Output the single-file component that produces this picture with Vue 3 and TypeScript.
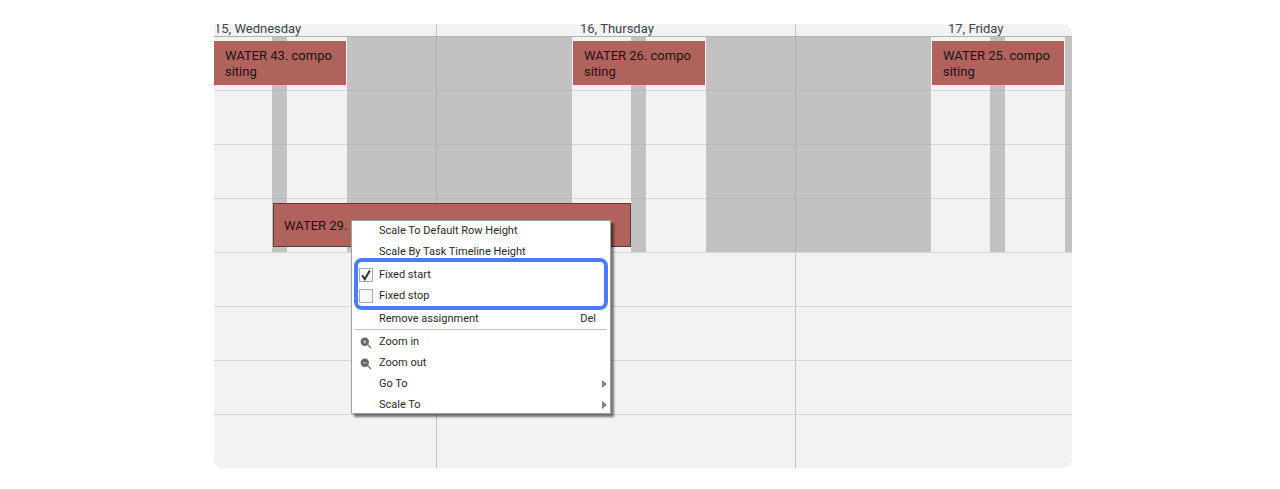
<script setup lang="ts">
interface Bar { id: number; left: number; width: number; label: string }
const dayLabels = [
  { text: '15, Wednesday', left: 0 },
  { text: '16, Thursday', left: 366 },
  { text: '17, Friday', left: 734 },
]
const bands = [
  { left: 58, width: 15 },
  { left: 133, width: 225 },
  { left: 417, width: 15 },
  { left: 492, width: 225 },
  { left: 776, width: 15 },
  { left: 851, width: 7 },
]
const bars: Bar[] = [
  { id: 1, left: 0, width: 132, label: 'WATER 43. compositing' },
  { id: 2, left: 359, width: 132, label: 'WATER 26. compositing' },
  { id: 3, left: 718, width: 132, label: 'WATER 25. compositing' },
]
const rows = Array.from({ length: 8 }, (_, i) => i)
const vlines = [222, 581]
</script>

<template>
  <div class="page">
    <section class="gantt">
      <div v-for="v in vlines" :key="v" class="vline" :style="{ left: v + 'px' }"></div>
      <header class="days">
        <span v-for="d in dayLabels" :key="d.text" class="day" :style="{ left: d.left + 'px' }">{{ d.text }}</span>
      </header>
      <div class="canvas">
        <div class="rows">
          <div v-for="r in rows" :key="r" class="row"></div>
        </div>
        <div v-for="(b, i) in bands" :key="i" class="band" :style="{ left: b.left + 'px', width: b.width + 'px' }"></div>
        <div v-for="b in bars" :key="b.id" class="bar" :style="{ left: b.left + 'px', width: b.width + 'px' }">{{ b.label }}</div>
        <div class="bar selected">WATER 29.</div>

        <div class="menu">
          <div class="item">Scale To Default Row Height</div>
          <div class="item">Scale By Task Timeline Height</div>
          <div class="group">
            <div class="item">
              <span class="check">
                <svg width="12" height="12" viewBox="0 0 12 12"><path d="M2.2 6.4 L4.8 10.2 L9.8 1.6" fill="none" stroke="#333" stroke-width="2" /></svg>
              </span>
              Fixed start
            </div>
            <div class="item">
              <span class="check"></span>
              Fixed stop
            </div>
          </div>
          <div class="item"><span class="grow">Remove assignment</span><span class="key">Del</span></div>
          <div class="sep"></div>
          <div class="item">
            <svg class="ico" width="12" height="12" viewBox="0 0 12 12">
              <path d="M7.3 7.3 L11 11" stroke="#777" stroke-width="1.4" />
              <circle cx="4.8" cy="4.8" r="4.2" fill="#666" />
              <path d="M2.8 4.8 H6.8 M4.8 2.8 V6.8" stroke="#c8c8c8" stroke-width="1" />
            </svg>
            Zoom in
          </div>
          <div class="item">
            <svg class="ico" width="12" height="12" viewBox="0 0 12 12">
              <path d="M7.3 7.3 L11 11" stroke="#777" stroke-width="1.4" />
              <circle cx="4.8" cy="4.8" r="4.2" fill="#666" />
              <path d="M2.8 4.8 H6.8" stroke="#c8c8c8" stroke-width="1" />
            </svg>
            Zoom out
          </div>
          <div class="item"><span class="grow">Go To</span><span class="arrow"></span></div>
          <div class="item"><span class="grow">Scale To</span><span class="arrow"></span></div>
          <div class="highlight"></div>
        </div>
      </div>
    </section>
  </div>
</template>

<style>
html, body { margin: 0; background: #fff; }
</style>

<style scoped>
.page {
  width: 1280px;
  height: 489px;
  padding: 24px 208px 21px 214px;
  box-sizing: border-box;
  overflow: hidden;
  font-family: Roboto, "Liberation Sans", sans-serif;
}
.gantt {
  position: relative;
  width: 858px;
  height: 444px;
  background: #f2f2f2;
  border-radius: 0 10px 8px 8px;
  overflow: hidden;
  display: flex;
  flex-direction: column;
}
.days {
  position: relative;
  height: 12px;
  flex: none;
  border-bottom: 1px solid #b2b2b2;
}
.day {
  position: absolute;
  top: 0;
  font-size: 13px;
  line-height: 10px;
  color: #3c4650;
  white-space: nowrap;
}
.day:first-child { clip-path: inset(-4px 0 -4px 3px); }
.canvas { position: relative; flex: 1; }
.rows { display: flex; flex-direction: column; }
.row {
  height: 54px;
  box-sizing: border-box;
  border-bottom: 1px solid #d6d6d6;
}
.band {
  position: absolute;
  top: 0;
  height: 215px;
  background: rgba(167, 167, 167, 0.64);
}
.vline {
  position: absolute;
  top: 0;
  bottom: 0;
  width: 1px;
  background: #c3c3c3;
}
.bar {
  position: absolute;
  top: 4px;
  height: 44px;
  box-sizing: border-box;
  padding: 7px 11px 0;
  background: #b0625c;
  color: #1c1414;
  font-size: 13px;
  line-height: 16px;
  word-break: break-all;
  overflow: hidden;
}
.selected {
  left: 59px;
  top: 166px;
  width: 358px;
  padding: 14px 10px 0;
  border: 1px solid #4c4040;
  white-space: nowrap;
}
.menu {
  position: absolute;
  left: 137px;
  top: 183px;
  width: 260px;
  height: 194px;
  box-sizing: border-box;
  background: #fff;
  border: 1px solid #a0a0a0;
  box-shadow: 3px 3px 2px rgba(0, 0, 0, 0.5);
  font-size: 11px;
  color: #2a2a2a;
  z-index: 2;
}
.item {
  height: 21px;
  display: flex;
  align-items: center;
  padding: 0 3px 0 27px;
  position: relative;
  white-space: nowrap;
}
.item:first-child { margin-top: -1px; }
.group { margin: 2px 0; }
.grow { flex: 1; }
.key { margin-right: 11px; }
.check {
  position: absolute;
  left: 7px;
  top: 4px;
  width: 14px;
  height: 14px;
  box-sizing: border-box;
  border: 1px solid #a8a8a8;
  background: #f6f6f6;
  display: flex;
  align-items: center;
  justify-content: center;
}
.group .item:first-child { margin-top: 0; }
.ico { position: absolute; left: 8px; top: 6px; }
.sep { height: 1px; background: #c4c4c4; margin: 0 3px 1px; }
.arrow {
  width: 0;
  height: 0;
  border-left: 5px solid #808080;
  border-top: 4px solid transparent;
  border-bottom: 4px solid transparent;
}
.highlight {
  position: absolute;
  left: 2px;
  top: 37px;
  width: 254px;
  height: 52px;
  box-sizing: border-box;
  border: 4px solid #4a7cf7;
  border-radius: 8px;
  pointer-events: none;
}
</style>
